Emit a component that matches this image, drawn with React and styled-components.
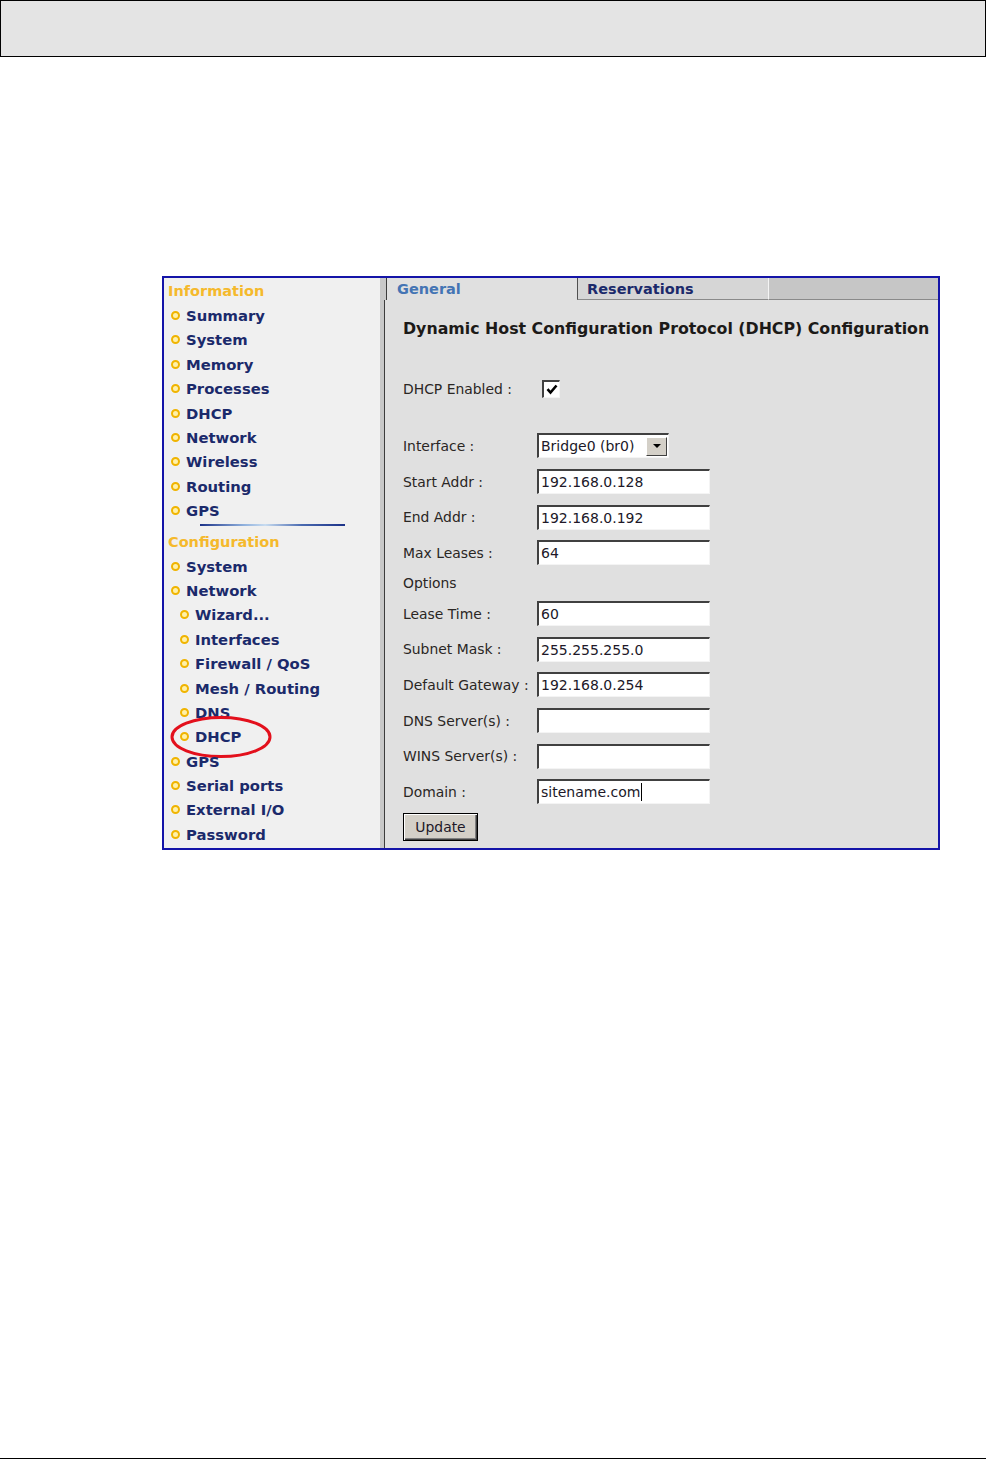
import styled, { createGlobalStyle } from "styled-components";

const GlobalStyle = createGlobalStyle`
  html, body {
    margin: 0;
    padding: 0;
    background: #ffffff;
  }
  body {
    font-family: "DejaVu Sans", "Noto Sans", sans-serif;
  }
`;

const Page = styled.div`
  height: 1460px;
  display: flex;
  flex-direction: column;
  box-sizing: border-box;
`;

const HeaderBox = styled.div`
  height: 57px;
  box-sizing: border-box;
  border: 1.5px solid #000;
  background: #e4e4e4;
`;

const Frame = styled.div`
  margin: 219px 0 0 162px;
  width: 778px;
  height: 574px;
  box-sizing: border-box;
  border: 2px solid #1414a8;
  display: flex;
  overflow: hidden;
`;

const Sidebar = styled.div`
  flex: none;
  width: 216px;
  background: #f0f0f0;
  padding-top: 1px;
  box-sizing: border-box;
`;

const Divider = styled.div`
  flex: none;
  width: 4px;
  background: #c8c8c8;
`;

const Heading = styled.div`
  height: 24.4px;
  line-height: 24.4px;
  padding-left: 4px;
  font-size: 14.5px;
  font-weight: 700;
  color: #f5b92c;
`;

const NavItem = styled.div`
  position: relative;
  height: 24.4px;
  display: flex;
  align-items: center;
  gap: 6px;
  padding-left: ${(p) => (p.$sub ? "16px" : "7px")};
  font-size: 14.8px;
  font-weight: 700;
  color: #1b2a6b;
`;

const Bullet = styled.span`
  width: 9px;
  height: 9px;
  box-sizing: border-box;
  border-radius: 50%;
  border: 2px solid #f0b400;
  background: #fff1a8;
  flex: none;
`;

const Ring = styled.svg`
  position: absolute;
  left: 5px;
  top: -10px;
  width: 104px;
  height: 44px;
  pointer-events: none;
`;

const NavRule = styled.div`
  height: 6.6px;
  padding: 1.4px 0 0 36px;
  box-sizing: border-box;
  &::after {
    content: "";
    display: block;
    width: 145px;
    height: 2px;
    background: linear-gradient(90deg, #1c3288 0%, #8fb0dc 30%, #c8dcf0 45%, #4a6ab0 70%, #1c3288 100%);
  }
`;

const Content = styled.div`
  flex: 1;
  min-width: 0;
  display: flex;
  flex-direction: column;
`;

const TabBar = styled.div`
  height: 22px;
  display: flex;
  background: #c8c8c8;
  padding-left: 2px;
`;

const Tab = styled.div`
  width: 191px;
  flex: none;
  box-sizing: border-box;
  border-left: 1px solid ${(p) => (p.$active ? "#3c3c3c" : "#505050")};
  border-bottom: ${(p) => (p.$active ? "none" : "1px solid #8a8a8a")};
  background: ${(p) => (p.$active ? "#e0e0e0" : "#d6d6d6")};
  padding-left: ${(p) => (p.$active ? "10px" : "9px")};
  line-height: 22px;
  font-size: 14.5px;
  font-weight: 700;
  color: ${(p) => (p.$active ? "#4474b4" : "#1b2a6b")};
`;

const TabFill = styled.div`
  flex: 1;
  background: #c6c6c6;
  border-left: 1px solid #f4f4f4;
  border-bottom: 1px solid #8a8a8a;
`;

const Body = styled.div`
  flex: 1;
  background: #e0e0e0;
  border-left: 1px solid #3c3c3c;
  padding: 18px 0 0 18px;
`;

const Title = styled.div`
  height: 22px;
  line-height: 22px;
  font-size: 15.8px;
  font-weight: 700;
  color: #1c1a18;
  white-space: nowrap;
`;

const Row = styled.div`
  display: grid;
  grid-template-columns: 134px 173px;
  align-items: center;
  height: ${(p) => p.$h || 35.6}px;
  margin-top: ${(p) => p.$mt || 0}px;
`;

const Label = styled.span`
  font-size: 13.9px;
  color: #2a2624;
  white-space: nowrap;
`;

const Field = styled.div`
  height: 25px;
  box-sizing: border-box;
  width: ${(p) => p.$w || 173}px;
  background: #fff;
  border-style: solid;
  border-width: 2px 1px 1px 2px;
  border-color: #404040 #f4f4f4 #f4f4f4 #404040;
  display: flex;
  align-items: center;
  padding-left: 2px;
  font-size: 14px;
  color: #201828;
  white-space: nowrap;
`;

const Caret = styled.span`
  width: 1px;
  height: 18px;
  background: #000;
  margin-left: 1px;
`;

const SelectText = styled.span`
  flex: 1;
`;

const ArrowButton = styled.span`
  width: 21px;
  height: 19px;
  margin-right: 1px;
  box-sizing: border-box;
  background: #d4d0c8;
  border-style: solid;
  border-width: 1px;
  border-color: #ffffff #404040 #404040 #ffffff;
  display: flex;
  align-items: center;
  justify-content: center;
  &::after {
    content: "";
    border-left: 4px solid transparent;
    border-right: 4px solid transparent;
    border-top: 4px solid #000;
  }
`;

const CheckBox = styled.span`
  margin-left: 5px;
  width: 18px;
  height: 18px;
  box-sizing: border-box;
  background: #fff;
  border-style: solid;
  border-width: 2px 1px 1px 2px;
  border-color: #404040 #f4f4f4 #f4f4f4 #404040;
  display: flex;
  align-items: center;
  justify-content: center;
`;

const UpdateButton = styled.button`
  width: 75px;
  height: 28px;
  box-sizing: border-box;
  background: #d4d0c8;
  border: 1px solid #000;
  box-shadow: inset 1px 1px 0 #ffffff, inset -1px -1px 0 #404040, inset -2px -2px 0 #808080;
  font-family: "DejaVu Sans", sans-serif;
  font-size: 13.9px;
  color: #201828;
  padding: 0;
`;

const FooterRule = styled.div`
  margin-top: auto;
  margin-bottom: 1px;
  height: 1.5px;
  background: #000;
`;

const infoItems = ["Summary", "System", "Memory", "Processes", "DHCP", "Network", "Wireless", "Routing", "GPS"];

const configItems = [
  { label: "System" },
  { label: "Network" },
  { label: "Wizard...", sub: true },
  { label: "Interfaces", sub: true },
  { label: "Firewall / QoS", sub: true },
  { label: "Mesh / Routing", sub: true },
  { label: "DNS", sub: true },
  { label: "DHCP", sub: true, circled: true },
  { label: "GPS" },
  { label: "Serial ports" },
  { label: "External I/O" },
  { label: "Password" },
];

const fields = [
  { label: "Start Addr :", value: "192.168.0.128" },
  { label: "End Addr :", value: "192.168.0.192" },
  { label: "Max Leases :", value: "64" },
  { label: "Options", plain: true },
  { label: "Lease Time :", value: "60" },
  { label: "Subnet Mask :", value: "255.255.255.0" },
  { label: "Default Gateway :", value: "192.168.0.254" },
  { label: "DNS Server(s) :", value: "" },
  { label: "WINS Server(s) :", value: "" },
  { label: "Domain :", value: "sitename.com", caret: true },
];

function Item({ label, sub, circled }) {
  return (
    <NavItem $sub={sub}>
      <Bullet />
      {label}
      {circled && (
        <Ring viewBox="0 0 104 44">
          <ellipse cx="52" cy="22" rx="49" ry="19.5" fill="none" stroke="#e3101c" strokeWidth="3" />
        </Ring>
      )}
    </NavItem>
  );
}

export default function App() {
  return (
    <Page>
      <GlobalStyle />
      <HeaderBox />
      <Frame>
        <Sidebar>
          <Heading>Information</Heading>
          {infoItems.map((label) => (
            <Item key={label} label={label} />
          ))}
          <NavRule />
          <Heading>Configuration</Heading>
          {configItems.map((it) => (
            <Item key={it.label + (it.sub ? "-s" : "")} {...it} />
          ))}
        </Sidebar>
        <Divider />
        <Content>
          <TabBar>
            <Tab $active>General</Tab>
            <Tab>Reservations</Tab>
            <TabFill />
          </TabBar>
          <Body>
            <Title>Dynamic Host Configuration Protocol (DHCP) Configuration</Title>
            <Row $mt={31.2}>
              <Label>DHCP Enabled :</Label>
              <CheckBox>
                <svg width="12" height="11" viewBox="0 0 12 11">
                  <path d="M1.5 5.2 L4.5 8.5 L10.5 1.5" fill="none" stroke="#000" strokeWidth="2.6" />
                </svg>
              </CheckBox>
            </Row>
            <Row $mt={21.4}>
              <Label>Interface :</Label>
              <Field $w={132}>
                <SelectText>Bridge0 (br0)</SelectText>
                <ArrowButton />
              </Field>
            </Row>
            {fields.map((f) => (
              <Row key={f.label} $h={f.plain ? 25.4 : 35.6}>
                <Label>{f.label}</Label>
                {!f.plain && (
                  <Field>
                    {f.value}
                    {f.caret && <Caret />}
                  </Field>
                )}
              </Row>
            ))}
            <Row>
              <UpdateButton>Update</UpdateButton>
            </Row>
          </Body>
        </Content>
      </Frame>
      <FooterRule />
    </Page>
  );
}
